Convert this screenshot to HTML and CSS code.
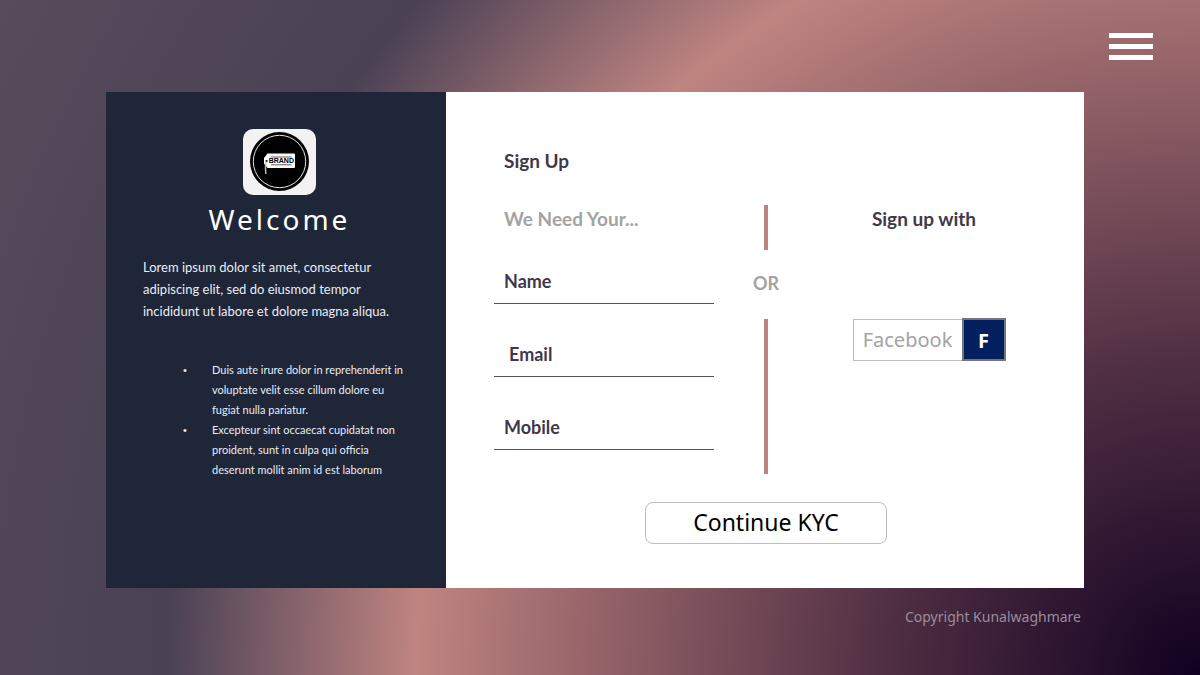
FILE: index.html
```html
<!DOCTYPE html>
<html lang="en">
<head>
  <meta charset="utf-8">
  <meta name="viewport" content="width=device-width, initial-scale=1">
  <title>Sign Up</title>
  <link rel="stylesheet" href="styles.css">
</head>
<body>
  <header class="topbar">
    <button class="menu" type="button" aria-label="Menu">
      <span class="menu-bar"></span>
      <span class="menu-bar"></span>
      <span class="menu-bar"></span>
    </button>
  </header>

  <main class="card">
    <section class="intro">
      <svg class="logo" viewBox="0 0 73 66" role="img" aria-label="Brand">
        <rect width="73" height="66" rx="10" fill="#f3f2f2"/>
        <circle cx="36.5" cy="32.5" r="29.5" fill="#000"/>
        <circle cx="36.5" cy="32.5" r="26.2" fill="none" stroke="#e4e4e4" stroke-width="1"/>
        <path d="M24.500 24.500H51q1 0 1 1V38q0 1-1 1H24.500L21 34.500V29z" fill="#fff"/>
        <circle cx="23.600" cy="32" r="1.100" fill="#000"/>
        <path d="M23.300 32.500q-1.300 2-.5 12.500" fill="none" stroke="#bbb" stroke-width="1.500"/>
        <path d="M28 28h20.500M28 35.800h20.500" stroke="#333" stroke-width=".8"/>
        <text class="logo-text" x="38.300" y="34.300" text-anchor="middle">BRAND</text>
      </svg>
      <h1 class="welcome">Welcome</h1>
      <p class="lead">Lorem ipsum dolor sit amet, consectetur<br>adipiscing elit, sed do eiusmod tempor<br>incididunt ut labore et dolore magna aliqua.</p>
      <ul class="points">
        <li>Duis aute irure dolor in reprehenderit in<br>voluptate velit esse cillum dolore eu<br>fugiat nulla pariatur.</li>
        <li>Excepteur sint occaecat cupidatat non<br>proident, sunt in culpa qui officia<br>deserunt mollit anim id est laborum</li>
      </ul>
    </section>

    <form class="signup">
      <h2 class="title">Sign Up</h2>
      <div class="columns">
        <div class="fields">
          <p class="hint">We Need Your...</p>
          <input class="field" type="text" name="name" placeholder="Name" aria-label="Name">
          <input class="field field-email" type="email" name="email" placeholder="Email" aria-label="Email">
          <input class="field" type="tel" name="mobile" placeholder="Mobile" aria-label="Mobile">
        </div>
        <div class="divider">
          <span class="rule rule-short"></span>
          <span class="or">OR</span>
          <span class="rule rule-long"></span>
        </div>
        <div class="social">
          <h3 class="social-title">Sign up with</h3>
          <button class="facebook" type="button">
            <span class="facebook-name">Facebook</span>
            <span class="facebook-mark">F</span>
          </button>
        </div>
      </div>
      <button class="continue" type="submit">Continue KYC</button>
    </form>
  </main>

  <footer class="copyright">Copyright Kunalwaghmare</footer>
</body>
</html>
```

FILE: styles.css
```css
* {
  box-sizing: border-box;
}

body {
  margin: 0;
  min-height: 100vh;
  padding: 0 116px 0 106px;
  font-family: Lato, "Open Sans", sans-serif;
  color: #3f384b;
  background: radial-gradient(circle farthest-corner at 100% 100%,
    #100020 0%, #502f43 23%, #bf8480 57%, #4a4155 75%, #574c5b 100%) no-repeat;
}

h1, h2, h3, p, ul {
  margin: 0;
  padding: 0;
  font-weight: inherit;
}

button, input {
  font: inherit;
  color: inherit;
  background: none;
  border: 0;
  border-radius: 0;
  padding: 0;
}

.topbar {
  display: flex;
  justify-content: flex-end;
  margin-right: -69px;
  padding: 33px 0 32px;
}

.menu {
  display: flex;
  flex-direction: column;
  gap: 6px;
  width: 44px;
}

.menu-bar {
  height: 5px;
  background: #fff;
}

.card {
  display: grid;
  grid-template-columns: 340px 1fr;
  background: #fff;
}

.intro {
  display: flex;
  flex-direction: column;
  padding: 37px 30px 37px 37px;
  color: #e9edf6;
  background: #1e2638;
}

.logo {
  align-self: center;
  width: 73px;
  height: 66px;
}

.logo-text {
  font: 700 7px "Liberation Sans", sans-serif;
}

.welcome {
  align-self: center;
  font: 400 28px/48px "Noto Sans", sans-serif;
  letter-spacing: 3px;
  color: #fff;
}

.lead {
  margin-top: 13px;
  font-size: 13px;
  line-height: 22px;
}

.points {
  margin-top: 38px;
  padding-left: 69px;
  list-style: none;
  font-size: 11px;
  line-height: 20px;
  white-space: nowrap;
}

.points li::before {
  content: "•";
  float: left;
  margin-left: -29px;
  font-family: "Liberation Sans", sans-serif;
}

.signup {
  display: flex;
  flex-direction: column;
  padding: 55px 46px 44px 48px;
  font-size: 18px;
  font-weight: 700;
  line-height: 28px;
}

.title {
  padding-left: 10px;
  font-size: 19px;
}

.columns {
  display: grid;
  grid-template-columns: 1fr 104px 1fr;
  margin-top: 30px;
}

.fields {
  display: flex;
  flex-direction: column;
  gap: 29px;
}

.hint {
  margin-bottom: -2px;
  padding-left: 10px;
  font-size: 19px;
  color: #a3a3a3;
}

.field {
  width: 100%;
  height: 44px;
  padding: 0 0 2px 10px;
  border-bottom: 1px solid #55505f;
}

.field-email {
  padding-left: 15px;
}

.field::placeholder {
  color: #3f384b;
  opacity: 1;
}

.divider {
  display: flex;
  flex-direction: column;
  align-items: center;
}

.rule {
  width: 4px;
  background: #b98482;
}

.rule-short {
  height: 45px;
}

.rule-long {
  height: 155px;
}

.or {
  padding: 19px 0 22px;
  color: #a3a3a3;
}

.social {
  display: flex;
  flex-direction: column;
  align-items: center;
}

.social-title {
  padding-right: 8px;
  font-size: 19px;
}

.facebook {
  display: flex;
  margin-top: 85px;
  margin-left: 2px;
  height: 43px;
  font-family: "Noto Sans", sans-serif;
}

.facebook-name {
  width: 109px;
  height: 42px;
  margin-top: 1px;
  border: 1px solid #bdbdbd;
  border-right: 0;
  font-size: 20px;
  font-weight: 400;
  line-height: 40px;
  color: #a3a3a3;
}

.facebook-mark {
  width: 44px;
  height: 43px;
  border: 2px solid #73757c;
  font-size: 20px;
  line-height: 42px;
  color: #fff;
  background: #02205f;
}

.continue {
  align-self: center;
  width: 242px;
  height: 42px;
  margin-top: 28px;
  padding-bottom: 2px;
  border: 1px solid #bdbdbd;
  border-radius: 8px;
  font: 400 23px/38px "Noto Sans", sans-serif;
  color: #000;
}

.copyright {
  padding: 18px 3px;
  font: 400 14px/22px "Noto Sans", sans-serif;
  text-align: right;
  color: #9b8c9c;
}
```
